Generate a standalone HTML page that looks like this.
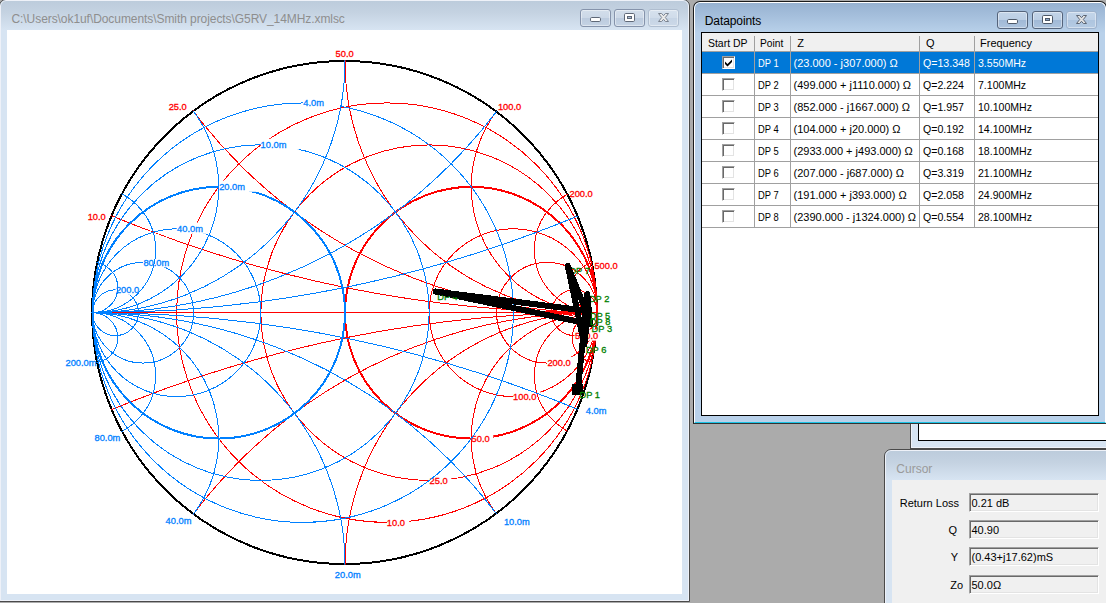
<!DOCTYPE html>
<html><head><meta charset="utf-8"><title>Smith</title>
<style>
html,body{margin:0;padding:0}
body{width:1106px;height:603px;background:#ababab;overflow:hidden;position:relative;font-family:"Liberation Sans",Arial,sans-serif;font-size:11px;color:#000}
.win{position:absolute;box-sizing:border-box;border:1px solid #4a4a4a;border-radius:7px 7px 0 0;overflow:hidden}
.win .hl{position:absolute;left:0;top:0;right:0;bottom:0;border:1px solid #fff;border-radius:6px 6px 0 0;pointer-events:none}
.inactive .hl{border-color:#eef1f8}
.inactive{background:linear-gradient(#bccbdb 0px,#c4d2e1 12px,#d7e4f2 30px,#d7e4f2 100%)}
.active{background:linear-gradient(#96b1d0 0px,#a5bfdc 14px,#b9d1ea 31px,#b9d1ea 100%)}
.title{position:absolute;font-size:12px;white-space:nowrap}
.btns{position:absolute;height:18px}
.b{position:absolute;top:0;width:31px;height:18px;box-sizing:border-box;border-radius:3px}
.b svg{position:absolute;left:-1px;top:-1px}
.btns .b{border:1px solid #55647b;box-shadow:inset 0 0 0 1px rgba(255,255,255,.42)}
.btns.act .b{background:linear-gradient(#c3d4e8 0,#bbcee4 47%,#a1b9d6 53%,#adc4de 100%)}
.btns.ina .b{background:linear-gradient(#d3deeb 0,#ccd8e7 47%,#bccbde 53%,#c5d3e4 100%);border-color:#8593ab}
.btns.act .bclose{border-color:#9db1cb;background:linear-gradient(#c3d5e9 0,#bdd0e6 47%,#aec5df 53%,#b5cbe3 100%)}
.btns.ina .bclose{border-color:#b0bed0;background:linear-gradient(#d6e1ee 0,#d0dcea 47%,#c6d4e5 53%,#ccd9e8 100%)}
.bmin{left:0} .bmax{left:34px} .bclose{left:68px} .act .bmax{left:35px} .act .bclose{left:69px}
#lv{position:absolute;left:7px;top:30px;width:398px;height:384px;box-sizing:border-box;border:1px solid #000;background:#fff;overflow:hidden}
#hdr{position:absolute;left:0;top:0;right:0;height:18px;background:#f0f0f0;border-bottom:1px solid #a0a0a0}
#hdr span{position:absolute;top:4px;white-space:nowrap}
#hdr i{position:absolute;top:3px;height:15px;width:1px;background:#a0a0a0}
.row{position:absolute;left:0;right:0;height:21px;border-bottom:1px solid #a0a0a0;background:#fff;white-space:nowrap}
.row.sel{background:#0078d7;color:#fff}
.row span{position:absolute;top:5px}
.row .cb{left:20px;top:4px;width:13px;height:13px;box-sizing:border-box;background:#fff;border:1px solid;border-color:#a0a0a0 #fff #fff #a0a0a0;box-shadow:inset 1px 1px 0 #696969,inset -1px -1px 0 #e3e3e3}
.row .cb .ck{position:absolute;left:1px;top:1px}
.row span{transform-origin:0 0} .c1{left:56px;transform:scaleX(.85)} .c2{left:91.5px} .c3{left:220.7px;transform:scaleX(.963)} .c4{left:275.5px;transform:scaleX(.96)}
.vl{position:absolute;top:19px;width:1px;height:176px;background:#a0a0a0}
.fld{position:absolute;left:77px;width:130px;height:19px;box-sizing:border-box;background:#f0f0f0;border:1px solid;border-color:#a0a0a0 #fff #fff #a0a0a0;box-shadow:inset 1px 1px 0 #696969,inset -1px -1px 0 #e3e3e3}
.fld span{position:absolute;left:1.5px;top:3px;white-space:nowrap}
.lb{position:absolute;white-space:nowrap;text-align:right;width:70px;left:-3px}
</style></head><body>

<!-- main chart window -->
<div class="win inactive" style="left:-1px;top:-1px;width:691px;height:603px">
<div class="hl"></div>
<div class="title" style="left:11.5px;top:11.5px;color:#8e8e8e;letter-spacing:-0.07px">C:\Users\ok1uf\Documents\Smith projects\G5RV_14MHz.xmlsc</div>
<div class="btns ina" style="left:580px;top:9px"><div class="b bmin"><svg width="31" height="18" viewBox="0 0 31 18"><rect x="10.5" y="8.5" width="10" height="4" rx="1.2" fill="#fff" stroke="#5f6877" stroke-width="1"/></svg></div>
<div class="b bmax"><svg width="31" height="18" viewBox="0 0 31 18"><rect x="10.5" y="4.5" width="10" height="8" rx="1.2" fill="#fff" stroke="#5f6877"/><rect x="13.5" y="7.5" width="4" height="2" fill="#a9bbd2" stroke="#5f6877"/></svg></div>
<div class="b bclose"><svg width="31" height="18" viewBox="0 0 31 18"><path d="M10.5 4.5 L13.6 4.5 L15.5 6.7 L17.4 4.5 L20.5 4.5 L17.3 8.5 L20.5 12.5 L17.4 12.5 L15.5 10.3 L13.6 12.5 L10.5 12.5 L13.7 8.5 Z" fill="#ececec" stroke="#7b8491" stroke-width="1" stroke-linejoin="round"/></svg></div></div>
</div>
<svg id="chart" width="675" height="564" viewBox="7 30 675 564" style="position:absolute;left:7px;top:30px" font-family="Liberation Sans, Arial, sans-serif" font-size="9.3" stroke-width="0.3">
<defs><clipPath id="cd"><ellipse cx="344.5" cy="312.5" rx="253.1" ry="252.2"/></clipPath></defs>
<rect x="7" y="30" width="675" height="564" fill="#fff"/>
<text x="87.7" y="219.9" fill="#ff0000" stroke="#ff0000">10.0</text>
<text x="168.7" y="109.9" fill="#ff0000" stroke="#ff0000">25.0</text>
<text x="335.6" y="56.7" fill="#ff0000" stroke="#ff0000">50.0</text>
<text x="497.9" y="109.8" fill="#ff0000" stroke="#ff0000">100.0</text>
<text x="569.5" y="196.8" fill="#ff0000" stroke="#ff0000">200.0</text>
<text x="594.4" y="268.9" fill="#ff0000" stroke="#ff0000">500.0</text>
<text x="65.5" y="366.0" fill="#0080ff" stroke="#0080ff">200.0m</text>
<text x="94.5" y="440.9" fill="#0080ff" stroke="#0080ff">80.0m</text>
<text x="165.6" y="523.7" fill="#0080ff" stroke="#0080ff">40.0m</text>
<text x="334.8" y="577.9" fill="#0080ff" stroke="#0080ff">20.0m</text>
<text x="503.9" y="524.9" fill="#0080ff" stroke="#0080ff">10.0m</text>
<text x="585.8" y="413.8" fill="#0080ff" stroke="#0080ff">4.0m</text>
<ellipse cx="344.5" cy="312.5" rx="252.4" ry="251.5" stroke="#000" stroke-width="2" shape-rendering="crispEdges" fill="none"/>
<g stroke="#ff0000" stroke-width="1" clip-path="url(#cd)" shape-rendering="crispEdges" fill="none">
<line x1="92.5" y1="312.5" x2="597.5" y2="312.5"/>
<ellipse cx="387.08" cy="312.70" rx="210.42" ry="209.75"/>
<ellipse cx="429.17" cy="312.70" rx="168.33" ry="167.80"/>
<ellipse cx="471.25" cy="312.70" rx="126.25" ry="125.85" stroke-width="2"/>
<ellipse cx="513.33" cy="312.70" rx="84.17" ry="83.90"/>
<ellipse cx="547.00" cy="312.70" rx="50.50" ry="50.34"/>
<ellipse cx="574.55" cy="312.70" rx="22.95" ry="22.88"/>
</g>
<rect x="387.1" y="516.3" width="22.1" height="11.2" fill="#fff"/>
<rect x="429.2" y="474.3" width="22.1" height="11.2" fill="#fff"/>
<rect x="471.2" y="432.3" width="22.1" height="11.2" fill="#fff"/>
<rect x="513.3" y="390.4" width="27.3" height="11.2" fill="#fff"/>
<rect x="547.0" y="356.8" width="27.3" height="11.2" fill="#fff"/>
<rect x="574.5" y="329.4" width="27.3" height="11.2" fill="#fff"/>
<text x="386.8" y="525.7" fill="#ff0000" stroke="#ff0000">10.0</text>
<text x="429.6" y="483.7" fill="#ff0000" stroke="#ff0000">25.0</text>
<text x="471.6" y="441.7" fill="#ff0000" stroke="#ff0000">50.0</text>
<text x="513.1" y="399.8" fill="#ff0000" stroke="#ff0000">100.0</text>
<text x="547.4" y="366.2" fill="#ff0000" stroke="#ff0000">200.0</text>
<text x="574.9" y="338.8" fill="#ff0000" stroke="#ff0000">500.0</text>
<g stroke="#ff0000" stroke-width="1" clip-path="url(#cd)" shape-rendering="crispEdges" fill="none">
<ellipse cx="597.50" cy="-945.80" rx="1262.50" ry="1258.50"/>
<ellipse cx="597.50" cy="1571.20" rx="1262.50" ry="1258.50"/>
<ellipse cx="597.50" cy="-190.70" rx="505.00" ry="503.40"/>
<ellipse cx="597.50" cy="816.10" rx="505.00" ry="503.40"/>
<ellipse cx="597.50" cy="61.00" rx="252.50" ry="251.70"/>
<ellipse cx="597.50" cy="564.40" rx="252.50" ry="251.70"/>
<ellipse cx="597.50" cy="186.85" rx="126.25" ry="125.85"/>
<ellipse cx="597.50" cy="438.55" rx="126.25" ry="125.85"/>
<ellipse cx="597.50" cy="249.77" rx="63.12" ry="62.92"/>
<ellipse cx="597.50" cy="375.62" rx="63.12" ry="62.92"/>
<ellipse cx="597.50" cy="287.53" rx="25.25" ry="25.17"/>
<ellipse cx="597.50" cy="337.87" rx="25.25" ry="25.17"/>
</g>
<g stroke="#0080ff" stroke-width="1" clip-path="url(#cd)" shape-rendering="crispEdges" fill="none">
<ellipse cx="302.92" cy="312.70" rx="210.42" ry="209.75"/>
<ellipse cx="260.83" cy="312.70" rx="168.33" ry="167.80"/>
<ellipse cx="218.75" cy="312.70" rx="126.25" ry="125.85" stroke-width="2"/>
<ellipse cx="176.67" cy="312.70" rx="84.17" ry="83.90"/>
<ellipse cx="143.00" cy="312.70" rx="50.50" ry="50.34"/>
<ellipse cx="115.45" cy="312.70" rx="22.95" ry="22.88"/>
</g>
<rect x="302.9" y="96.7" width="38.0" height="11.2" fill="#fff"/>
<rect x="260.8" y="138.7" width="38.0" height="11.2" fill="#fff"/>
<rect x="218.8" y="180.6" width="38.0" height="11.2" fill="#fff"/>
<rect x="176.7" y="222.6" width="38.0" height="11.2" fill="#fff"/>
<rect x="143.0" y="256.2" width="38.0" height="11.2" fill="#fff"/>
<rect x="115.5" y="283.6" width="38.0" height="11.2" fill="#fff"/>
<text x="303.3" y="106.1" fill="#0080ff" stroke="#0080ff">4.0m</text>
<text x="260.6" y="148.1" fill="#0080ff" stroke="#0080ff">10.0m</text>
<text x="219.2" y="190.0" fill="#0080ff" stroke="#0080ff">20.0m</text>
<text x="177.1" y="232.0" fill="#0080ff" stroke="#0080ff">40.0m</text>
<text x="143.4" y="265.6" fill="#0080ff" stroke="#0080ff">80.0m</text>
<text x="115.9" y="293.0" fill="#0080ff" stroke="#0080ff">200.0</text>
<g stroke="#0080ff" stroke-width="1" clip-path="url(#cd)" shape-rendering="crispEdges" fill="none">
<ellipse cx="92.50" cy="-945.80" rx="1262.50" ry="1258.50"/>
<ellipse cx="92.50" cy="1571.20" rx="1262.50" ry="1258.50"/>
<ellipse cx="92.50" cy="-190.70" rx="505.00" ry="503.40"/>
<ellipse cx="92.50" cy="816.10" rx="505.00" ry="503.40"/>
<ellipse cx="92.50" cy="61.00" rx="252.50" ry="251.70"/>
<ellipse cx="92.50" cy="564.40" rx="252.50" ry="251.70"/>
<ellipse cx="92.50" cy="186.85" rx="126.25" ry="125.85"/>
<ellipse cx="92.50" cy="438.55" rx="126.25" ry="125.85"/>
<ellipse cx="92.50" cy="249.77" rx="63.12" ry="62.92"/>
<ellipse cx="92.50" cy="375.62" rx="63.12" ry="62.92"/>
<ellipse cx="92.50" cy="287.53" rx="25.25" ry="25.17"/>
<ellipse cx="92.50" cy="337.87" rx="25.25" ry="25.17"/>
</g>
<line x1="112" y1="312.5" x2="142" y2="312.5" stroke="#ff0000" stroke-width="1" shape-rendering="crispEdges"/>
<rect x="572" y="384" width="11" height="11" fill="#000" shape-rendering="crispEdges"/>
<text x="579.5" y="398.1" fill="#008000" stroke="#008000">DP 1</text>
<line x1="577.9" y1="390.0" x2="587.3" y2="294.2" stroke="#000" stroke-width="6" stroke-linecap="round" shape-rendering="crispEdges"/>
<text x="588.9" y="302.3" fill="#008000" stroke="#008000">DP 2</text>
<line x1="587.3" y1="294.2" x2="590.0" y2="324.1" stroke="#000" stroke-width="6" stroke-linecap="round" shape-rendering="crispEdges"/>
<text x="591.6" y="332.2" fill="#008000" stroke="#008000">DP 3</text>
<line x1="590.0" y1="324.1" x2="435.6" y2="291.5" stroke="#000" stroke-width="6" stroke-linecap="round" shape-rendering="crispEdges"/>
<text x="437.2" y="299.6" fill="#008000" stroke="#008000">DP 4</text>
<line x1="435.6" y1="291.5" x2="588.1" y2="311.0" stroke="#000" stroke-width="6" stroke-linecap="round" shape-rendering="crispEdges"/>
<text x="589.7" y="319.1" fill="#008000" stroke="#008000">DP 5</text>
<line x1="588.1" y1="311.0" x2="584.3" y2="344.5" stroke="#000" stroke-width="6" stroke-linecap="round" shape-rendering="crispEdges"/>
<text x="585.9" y="352.6" fill="#008000" stroke="#008000">DP 6</text>
<line x1="584.3" y1="344.5" x2="567.8" y2="265.9" stroke="#000" stroke-width="6" stroke-linecap="round" shape-rendering="crispEdges"/>
<text x="569.4" y="274.0" fill="#008000" stroke="#008000">DP 7</text>
<line x1="567.8" y1="265.9" x2="588.3" y2="316.7" stroke="#000" stroke-width="6" stroke-linecap="round" shape-rendering="crispEdges"/>
<text x="589.9" y="324.8" fill="#008000" stroke="#008000">DP 8</text>
</svg>

<!-- third window behind -->
<div class="win inactive" style="left:910px;top:300px;width:260px;height:149px;border-radius:0">
<div class="hl" style="border-radius:0"></div>
<div style="position:absolute;left:7px;top:20px;width:300px;height:120px;box-sizing:border-box;border:1px solid #000;background:#fff"></div>
</div>

<!-- cursor window -->
<div class="win inactive" style="left:884px;top:449px;width:260px;height:200px">
<div class="hl"></div>
<div class="title" style="left:11.3px;top:11.5px;color:#9a9a9a">Cursor</div>
<div style="position:absolute;left:7px;top:30px;width:260px;height:200px;background:#f0f0f0">
<div class="lb" style="top:17px">Return Loss</div><div class="fld" style="top:13px"><span>0.21 dB</span></div>
<div class="lb" style="top:44px;left:-5px">Q</div><div class="fld" style="top:40px"><span>40.90</span></div>
<div class="lb" style="top:71px;left:-4px">Y</div><div class="fld" style="top:67px"><span>(0.43+j17.62)mS</span></div>
<div class="lb" style="top:99px;left:1px">Zo</div><div class="fld" style="top:95px"><span>50.0Ω</span></div>
</div>
</div>

<!-- datapoints window -->
<div class="win active" style="left:693px;top:1px;width:414px;height:423px;border-color:#1c1c1c #1c1c1c #333 #1c1c1c">
<div class="hl" style="border-bottom-color:#19c3e6"></div>
<div class="title" style="left:10.8px;top:12px;letter-spacing:-0.1px">Datapoints</div>
<div class="btns act" style="left:303px;top:9px"><div class="b bmin"><svg width="31" height="18" viewBox="0 0 31 18"><rect x="10.5" y="8.5" width="10" height="4" rx="1.2" fill="#fff" stroke="#4d5868" stroke-width="1"/></svg></div>
<div class="b bmax"><svg width="31" height="18" viewBox="0 0 31 18"><rect x="10.5" y="4.5" width="10" height="8" rx="1.2" fill="#fff" stroke="#4d5868"/><rect x="13.5" y="7.5" width="4" height="2" fill="#8aa5c8" stroke="#4d5868"/></svg></div>
<div class="b bclose"><svg width="31" height="18" viewBox="0 0 31 18"><path d="M10.5 4.5 L13.6 4.5 L15.5 6.7 L17.4 4.5 L20.5 4.5 L17.3 8.5 L20.5 12.5 L17.4 12.5 L15.5 10.3 L13.6 12.5 L10.5 12.5 L13.7 8.5 Z" fill="#e4e4e4" stroke="#5d6674" stroke-width="1" stroke-linejoin="round"/></svg></div></div>
<div id="lv">
<div id="hdr"><span style="left:6.3px;transform:scaleX(.95);transform-origin:0 0">Start DP</span><span style="left:58px;transform:scaleX(.93);transform-origin:0 0">Point</span><span style="left:95.3px">Z</span><span style="left:224px">Q</span><span style="left:278px">Frequency</span>
<i style="left:52px"></i><i style="left:88px"></i><i style="left:217px"></i><i style="left:272px"></i></div>
<div class="row sel" style="top:19px"><span class="cb"><svg class="ck" width="9" height="9" viewBox="0 0 9 9"><path d="M1 3.5 L1 6 L3.5 8.5 L8 4 L8 1.5 L3.5 6 Z" fill="#000"/></svg></span><span class="c1">DP 1</span><span class="c2">(23.000 - j307.000) Ω</span><span class="c3">Q=13.348</span><span class="c4">3.550MHz</span></div>
<div class="row" style="top:41px"><span class="cb"></span><span class="c1">DP 2</span><span class="c2">(499.000 + j1110.000) Ω</span><span class="c3">Q=2.224</span><span class="c4">7.100MHz</span></div>
<div class="row" style="top:63px"><span class="cb"></span><span class="c1">DP 3</span><span class="c2">(852.000 - j1667.000) Ω</span><span class="c3">Q=1.957</span><span class="c4">10.100MHz</span></div>
<div class="row" style="top:85px"><span class="cb"></span><span class="c1">DP 4</span><span class="c2">(104.000 + j20.000) Ω</span><span class="c3">Q=0.192</span><span class="c4">14.100MHz</span></div>
<div class="row" style="top:107px"><span class="cb"></span><span class="c1">DP 5</span><span class="c2">(2933.000 + j493.000) Ω</span><span class="c3">Q=0.168</span><span class="c4">18.100MHz</span></div>
<div class="row" style="top:129px"><span class="cb"></span><span class="c1">DP 6</span><span class="c2">(207.000 - j687.000) Ω</span><span class="c3">Q=3.319</span><span class="c4">21.100MHz</span></div>
<div class="row" style="top:151px"><span class="cb"></span><span class="c1">DP 7</span><span class="c2">(191.000 + j393.000) Ω</span><span class="c3">Q=2.058</span><span class="c4">24.900MHz</span></div>
<div class="row" style="top:173px"><span class="cb"></span><span class="c1">DP 8</span><span class="c2">(2390.000 - j1324.000) Ω</span><span class="c3">Q=0.554</span><span class="c4">28.100MHz</span></div>
<div class="vl" style="left:52px"></div><div class="vl" style="left:88px"></div><div class="vl" style="left:217px"></div><div class="vl" style="left:272px"></div>
</div>
</div>

</body></html>
